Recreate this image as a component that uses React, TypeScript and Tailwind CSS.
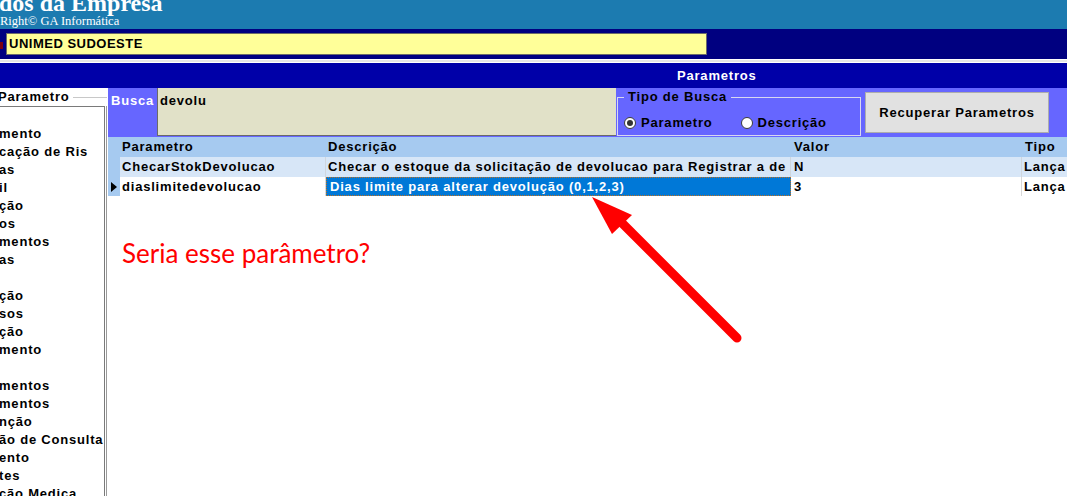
const listItems = [
  '',
  'mento',
  'cação de Ris',
  'as',
  'il',
  'ção',
  'os',
  'mentos',
  'as',
  '',
  'ção',
  'sos',
  'ção',
  'mento',
  '',
  'mentos',
  'mentos',
  'nção',
  'ão de Consulta',
  'ento',
  'tes',
  'ção Medica',
];

function Radio({ checked }: { checked?: boolean }) {
  return (
    <span className="w-[12px] h-[12px] rounded-full bg-white border border-[#3c3c3c] flex items-center justify-center">
      {checked && <span className="w-[6px] h-[6px] rounded-full bg-[#333]" />}
    </span>
  );
}

export default function App() {
  return (
    <div className="relative w-[1067px] h-[496px] overflow-hidden bg-white font-['Liberation_Sans',Arial,sans-serif] text-[13px] font-bold tracking-[0.8px] text-black">
      {/* header */}
      <div className="h-[29px] bg-[#1c7bb0] text-white font-['Liberation_Serif','Times_New_Roman',serif] tracking-normal overflow-hidden">
        <div className="text-[24px] leading-[18px] -mt-[6px] -ml-[1px] whitespace-nowrap">dos da Empresa</div>
        <div className="text-[12.5px] leading-[13px] font-normal mt-[3px] whitespace-nowrap">Right© GA Informática</div>
      </div>

      {/* empresa */}
      <div className="h-[30px] bg-[#000080] flex items-center">
        <span className="w-[3px] h-[7px] bg-[#7a0010] mt-[2px]" />
        <div className="ml-[3px] w-[701px] h-[22px] bg-[#ffff99] border border-[#6b6b6b] flex items-center pl-[2px] tracking-[0.5px]">
          UNIMED SUDOESTE
        </div>
      </div>

      <div className="h-[4px] bg-[#e6e6e6] border-y border-white" />

      <div className="h-[25px] bg-[#0000a8] text-white flex items-center pl-[677px] whitespace-nowrap">Parametros</div>

      {/* body */}
      <div className="flex h-[408px]">
        {/* left group */}
        <div className="w-[108px] pr-px flex flex-col bg-white">
          <div className="h-[18px] flex items-center">
            <span className="-ml-[2px] whitespace-nowrap">Parametro</span>
            <span className="flex-1 ml-[3px] h-px bg-[#c8c8c8]" />
          </div>
          <div className="flex-1 border-r border-[#9a9a9a] pr-px overflow-hidden">
            <div className="h-full border-t border-r border-[#7a7a7a] overflow-hidden">
              {listItems.map((t, i) => (
                <div key={i} className="h-[18px] leading-[18px] whitespace-nowrap -ml-[1px]">
                  {t}
                </div>
              ))}
            </div>
          </div>
        </div>

        {/* right */}
        <div className="flex-1 flex flex-col">
          <div className="h-[49px] bg-[#6666ff] flex">
            <div className="w-[49px] text-white pl-[3px] pt-[3px]">Busca</div>
            <div className="w-[459px] h-[48px] bg-[#e1e1c8] border-l border-b border-[#6a6a6a] pl-[2px] pt-[3px]">devolu</div>
            <div className="ml-[1px] mt-[9px] w-[244px] h-[39px] border border-[#d8d8f0] relative">
              <span className="absolute -top-[9px] left-[6px] px-[4px] bg-[#6666ff] leading-[16px]">Tipo de Busca</span>
              <div className="flex items-center mt-[15px] pl-[6px]">
                <Radio checked />
                <span className="ml-[5px]">Parametro</span>
                <span className="ml-[28px]"><Radio /></span>
                <span className="ml-[5px]">Descrição</span>
              </div>
            </div>
            <div className="ml-[4px] mt-[4px] w-[184px] h-[41px] bg-[#e1e1e1] border border-[#adadad] flex items-center justify-center">
              Recuperar Parametros
            </div>
          </div>

          {/* grid */}
          <div className="flex-1 bg-white overflow-hidden whitespace-nowrap">
            <div className="flex h-[20px] bg-[#a6caf0] items-center">
              <div className="w-[12px]" />
              <div className="w-[206px] pl-[2px]">Parametro</div>
              <div className="w-[465px] pl-[2px]">Descrição</div>
              <div className="w-[231px] pl-[3px]">Valor</div>
              <div className="flex-1 pl-[3px]">Tipo</div>
            </div>
            <div className="flex h-[20px] items-stretch">
              <div className="w-[12px] bg-[#a6caf0]" />
              <div className="w-[206px] bg-[#d7e6f7] pl-[2px] flex items-center border-r border-[#cfd6de]">ChecarStokDevolucao</div>
              <div className="w-[465px] bg-[#d7e6f7] pl-[2px] flex items-center overflow-hidden border-r border-[#cfd6de]">
                Checar o estoque da solicitação de devolucao para Registrar a de
              </div>
              <div className="w-[231px] bg-[#d7e6f7] pl-[3px] flex items-center border-r border-[#cfd6de]">N</div>
              <div className="flex-1 bg-[#d7e6f7] pl-[2px] flex items-center">Lança</div>
            </div>
            <div className="flex h-[19px] items-stretch">
              <div className="w-[12px] bg-[#a6caf0] flex items-center pl-[3px]">
                <span className="w-0 h-0 border-y-[5px] border-y-transparent border-l-[6px] border-l-black" />
              </div>
              <div className="w-[206px] pl-[2px] flex items-center border-r border-[#d8d8d8]">diaslimitedevolucao</div>
              <div className="w-[465px] bg-[#0078d7] text-white pl-[3px] flex items-center border border-dotted border-[#c07020] overflow-hidden">
                Dias limite para alterar devolução (0,1,2,3)
              </div>
              <div className="w-[231px] pl-[3px] flex items-center border-r border-[#d8d8d8]">3</div>
              <div className="flex-1 pl-[2px] flex items-center">Lança</div>
            </div>
          </div>
        </div>
      </div>

      {/* annotation */}
      <div className="absolute left-[122px] top-[238px] font-['Lato','Open_Sans',sans-serif] font-normal tracking-normal text-[26px] leading-[30px] text-[#ff0000] whitespace-nowrap">
        Seria esse parâmetro?
      </div>
      <svg className="absolute left-0 top-0 pointer-events-none" width="1067" height="496" viewBox="0 0 1067 496">
        <line x1="621" y1="222" x2="737" y2="338" stroke="#ff0000" strokeWidth="9" strokeLinecap="round" />
        <polygon points="592,197 632,215 612,234" fill="#ff0000" />
      </svg>
    </div>
  );
}
